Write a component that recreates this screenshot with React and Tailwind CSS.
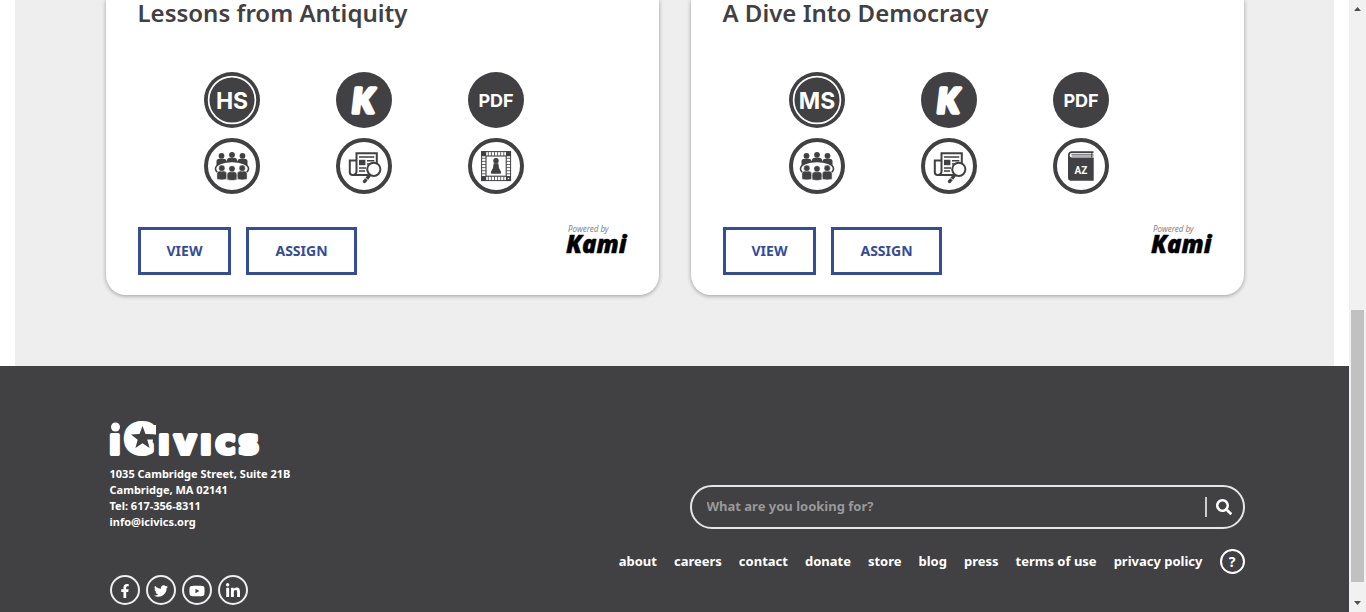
import React from "react";
import { FaFacebookF, FaTwitter, FaYoutube, FaLinkedinIn, FaSearch } from "react-icons/fa";

const INK = "#414042";

function LevelBadge({ level }) {
  return (
    <svg viewBox="0 0 56 56" className="size-14" role="img" aria-label={level}>
      <circle cx="28" cy="28" r="28" fill={INK} />
      <circle cx="28" cy="28" r="23.4" fill="none" stroke="#fff" strokeWidth="1.7" />
      <text x="28" y="36.5" textAnchor="middle" fontSize="23" className="fill-white font-['Inter',sans-serif] font-bold">
        {level}
      </text>
    </svg>
  );
}

function KamiBadge() {
  return (
    <svg viewBox="0 0 56 56" className="size-14" role="img" aria-label="Kami">
      <circle cx="28" cy="28" r="28" fill={INK} />
      <text
        x="27"
        y="40.5"
        textAnchor="middle"
        fontSize="34"
        stroke="#fff"
        strokeWidth="3.6"
        strokeLinejoin="round"
        className="fill-white font-['Lato',sans-serif] font-black italic"
      >
        K
      </text>
    </svg>
  );
}

function PdfBadge() {
  return (
    <svg viewBox="0 0 56 56" className="size-14" role="img" aria-label="PDF">
      <circle cx="28" cy="28" r="28" fill={INK} />
      <text x="28" y="35" textAnchor="middle" fontSize="18" className="fill-white font-['Inter',sans-serif] font-bold">
        PDF
      </text>
    </svg>
  );
}

function Ring({ label, children }) {
  return (
    <svg viewBox="0 0 56 56" className="size-14" role="img" aria-label={label} fill={INK}>
      <circle cx="28" cy="28" r="26" fill="#fff" stroke={INK} strokeWidth="4" />
      {children}
    </svg>
  );
}

function GroupBadge() {
  return (
    <Ring label="Group activity">
      {[[17.5, 17.8], [28, 16.8], [38.5, 17.8]].map(([x, y]) => (
        <g key={x}>
          <circle cx={x} cy={y} r="2.9" />
          <path d={`M${x - 5} ${y + 10}v-4.500q0-2.500 3-2.500h4q3 0 3 2.500v4.500z`} />
        </g>
      ))}
      <ellipse cx="28" cy="30.8" rx="16.5" ry="7.4" fill="#fff" stroke={INK} strokeWidth="1.6" />
      {[[17.8, 30.2], [28, 30.8], [38.2, 30.2]].map(([x, y]) => (
        <g key={x}>
          <path
            d={`M${x - 4.9} ${y + 11}v-5.500q0-2.600 3-2.600h3.800q3 0 3 2.600v5.500q-4.900 1.400-9.800 0z`}
            stroke="#fff"
            strokeWidth="0.5"
          />
          <circle cx={x} cy={y} r="3.1" stroke="#fff" strokeWidth="0.4" />
        </g>
      ))}
    </Ring>
  );
}

function ResearchBadge() {
  return (
    <Ring label="Primary sources">
      <g fill="none" stroke={INK} strokeWidth="2">
        <path d="M20 22.500h-6.200v11.700q0 2.800 2.800 2.800h15.900" />
        <path d="M20.500 34V15.300h20.300v13M20.500 33q0 4-3.700 4" />
        <path d="M23 19h15.300M31 22.800h7.300M31 26h3M23 30h7M23 33h6" strokeWidth="1.400" />
      </g>
      <path d="M23 21.800h6.400v5.400H23z" />
      <path d="M33 38l-4.500 5.500" stroke={INK} strokeWidth="3.400" strokeLinecap="round" />
      <path d="M29 39.700l3.500 2.800" stroke="#fff" strokeWidth="0.800" />
      <circle cx="37.800" cy="31.300" r="6.600" fill="#fff" stroke={INK} strokeWidth="2" />
    </Ring>
  );
}

function BoardGameBadge() {
  const ticks = [20.3, 23.4, 26.5, 29.6, 32.7, 35.8];
  return (
    <Ring label="Board game">
      <g fill="none" stroke={INK}>
        <rect x="13.600" y="13.600" width="29" height="29" strokeWidth="1" />
        <rect x="18" y="18" width="20.200" height="20.200" strokeWidth="1.100" />
        {ticks.map((t) => (
          <path
            key={t}
            strokeWidth="0.800"
            d={`M${t} 13.600v4.400M${t} 38.200v4.400M13.600 ${t}h4.400M38.200 ${t}h4.400`}
          />
        ))}
      </g>
      <path d="M13.200 13.200h5v5h-5z M38 13.200h5v5h-5z M13.200 38h5v5h-5z M38 38h5v5h-5z" />
      <circle cx="40.500" cy="40.500" r="0.800" fill="#fff" />
      <circle cx="28" cy="22.700" r="2.700" />
      <path d="M25.700 25.300h4.600q.2 5 2.400 8 1.200 2.200-.6 2.400h-8.200q-1.800-.2-.6-2.400 2.200-3 2.400-8z" />
    </Ring>
  );
}

function DictionaryBadge() {
  return (
    <Ring label="Glossary">
      <path d="M15 17.500q0-4.200 4-4.200h21.500v1.600H19q-2.400 0-2.400 2.300t2.400 2.300h21.700v23.200H18q-3 0-3-3z" />
      <path d="M18.500 16.300h22M18.500 18h22" stroke={INK} strokeWidth="0.800" />
      <path d="M38.800 14v5.500" stroke={INK} strokeWidth="0.900" />
      <text x="28" y="35.500" textAnchor="middle" fontSize="10" className="fill-white font-['Roboto',sans-serif] font-bold">
        AZ
      </text>
    </Ring>
  );
}

function PoweredByKami() {
  return (
    <svg viewBox="0 0 62 36" className="-mt-1 ml-auto h-9 w-[62px] overflow-visible" role="img" aria-label="Powered by Kami">
      <text x="3" y="9" fontSize="8" className="fill-[#858585] font-['Noto_Sans',sans-serif] italic">
        Powered by
      </text>
      <text
        x="1"
        y="30"
        fontSize="24"
        stroke="#000"
        strokeWidth="0.400"
        strokeLinejoin="round"
        className="fill-black font-['Noto_Sans',sans-serif] font-black italic"
      >
        Kami
      </text>
    </svg>
  );
}

function CardButton({ children }) {
  return (
    <button
      type="button"
      className="h-12 border-[3px] border-[#354c99] px-[26px] text-sm font-bold text-[#354c99] hover:bg-[#354c99] hover:text-white"
    >
      {children}
    </button>
  );
}

function LessonCard({ title, level, extra }) {
  return (
    <article className="rounded-b-[20px] bg-white px-8 pb-5 shadow-[0_1px_4px_rgba(0,0,0,0.35)]">
      <h2 className="h-[72px] text-2xl leading-[26px] font-semibold text-[#414042]">{title}</h2>
      <div className="ml-7 grid w-[396px] max-w-full grid-cols-3 justify-items-center gap-y-2.5">
        <LevelBadge level={level} />
        <KamiBadge />
        <PdfBadge />
        <GroupBadge />
        <ResearchBadge />
        {extra}
      </div>
      <div className="mt-[33px] flex items-start gap-[15px]">
        <CardButton>VIEW</CardButton>
        <CardButton>ASSIGN</CardButton>
        <PoweredByKami />
      </div>
    </article>
  );
}

function Logo() {
  return (
    <svg viewBox="0 0 152 36" className="h-9 w-[152px] overflow-visible" role="img" aria-label="iCivics" fill="#fff">
      <g stroke="#fff" strokeLinejoin="round" className="font-['DejaVu_Sans',sans-serif] font-bold">
        <text x="-0.9" y="33" fontSize="34" strokeWidth="4">ı</text>
        <text x="15.5" y="31" fontSize="37" strokeWidth="7">C</text>
        <text x="48 64 90 105.5 128.5" y="33" fontSize="34" strokeWidth="4">ıvıcs</text>
      </g>
      <circle cx="5.500" cy="6" r="4.500" />
      <circle cx="31" cy="18" r="12" />
      <path d="M36 4h10v10h-10z" />
      <path
        d="M32.500 5l3 8 8.500.4-6.700 5.300 2.300 8.300-7.100-4.700-7.100 4.700 2.300-8.300-6.700-5.300 8.500-.4z"
        fill={INK}
      />
      <path d="M36 13.400h11v5h-9z" fill={INK} />
    </svg>
  );
}

const socials = [
  ["Facebook", FaFacebookF, "size-3.5"],
  ["Twitter", FaTwitter, "size-3.5"],
  ["YouTube", FaYoutube, "size-4"],
  ["LinkedIn", FaLinkedinIn, "size-4"],
];

const links = ["about", "careers", "contact", "donate", "store", "blog", "press", "terms of use", "privacy policy"];

function Footer() {
  return (
    <footer className="flex-1 bg-[#414042] px-4 pt-[55px] pb-[7px] text-white">
      <div className="mx-auto flex max-w-[1140px] justify-between gap-8">
        <div className="pl-[5px]">
          <Logo />
          <address className="mt-[9px] text-[11px] leading-4 font-bold not-italic">
            1035 Cambridge Street, Suite 21B
            <br />
            Cambridge, MA 02141
            <br />
            Tel: 617-356-8311
            <br />
            <a href="mailto:info@icivics.org">info@icivics.org</a>
          </address>
          <ul className="mt-[45px] flex gap-1.5">
            {socials.map(([name, Icon, size]) => (
              <li key={name}>
                <a
                  href="#"
                  aria-label={name}
                  className="flex size-[30px] items-center justify-center rounded-full border-2 border-[#eeeeee] pt-0.5"
                >
                  <Icon className={size} />
                </a>
              </li>
            ))}
          </ul>
        </div>
        <div className="flex flex-col items-end pt-16">
          <form className="flex h-11 w-[555px] items-center rounded-[22px] border-2 border-[#e6e6e6] pr-[11px] pl-[15px]">
            <input
              type="search"
              aria-label="What are you looking for?"
              placeholder="What are you looking for?"
              className="min-w-0 flex-1 bg-transparent text-[13px] font-bold outline-none placeholder:text-[#999999]"
            />
            <button type="submit" aria-label="Search" className="flex h-5 items-center border-l-2 border-[#cccccc] pl-[9px]">
              <FaSearch className="size-4" />
            </button>
          </form>
          <nav className="mt-5 flex items-center gap-[17px] text-[13px] leading-[25px] font-bold">
            {links.map((label) => (
              <a key={label} href="#" className="whitespace-nowrap">
                {label}
              </a>
            ))}
            <a
              href="#"
              aria-label="Help"
              className="flex size-[25px] items-center justify-center rounded-full border-2 border-white text-sm"
            >
              ?
            </a>
          </nav>
        </div>
      </div>
    </footer>
  );
}

function Scrollbar() {
  return (
    <div aria-hidden="true" className="flex w-[17px] shrink-0 flex-col items-center bg-[#f1f1f1] py-[7px]">
      <svg viewBox="0 0 7 4" className="h-1 w-[7px]" fill="#505050">
        <path d="M0 4l3.500-4 3.500 4z" />
      </svg>
      <div className="flex-[299_1_0%]" />
      <div className="w-[13px] flex-[272_1_0%] bg-[#c1c1c1]" />
      <div className="flex-[19_1_0%]" />
      <svg viewBox="0 0 7 4" className="h-1 w-[7px]" fill="#505050">
        <path d="M0 0l3.500 4 3.500-4z" />
      </svg>
    </div>
  );
}

export default function App() {
  return (
    <div className="flex min-h-screen bg-white font-['Noto_Sans',sans-serif]">
      <div className="flex min-w-0 flex-1 flex-col">
        <main className="mx-[15px] bg-[#eeeeee] pb-[71px]">
          <div className="mx-auto grid max-w-[1138px] grid-cols-2 gap-8">
            <LessonCard title="Lessons from Antiquity" level="HS" extra={<BoardGameBadge />} />
            <LessonCard title="A Dive Into Democracy" level="MS" extra={<DictionaryBadge />} />
          </div>
        </main>
        <Footer />
      </div>
      <Scrollbar />
    </div>
  );
}
